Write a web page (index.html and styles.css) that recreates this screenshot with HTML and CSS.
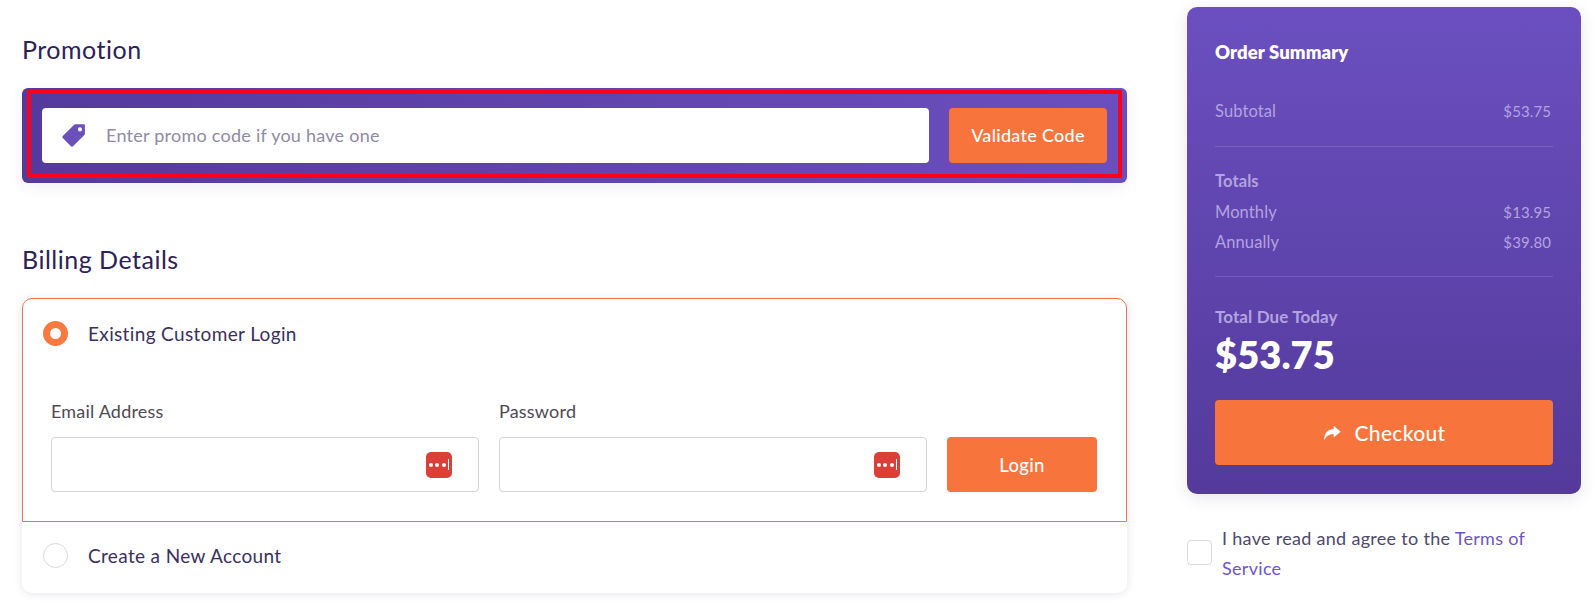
FILE: index.html
```html
<!DOCTYPE html>
<html lang="en">
<head>
<meta charset="utf-8">
<title>Checkout</title>
<link rel="stylesheet" href="styles.css">
</head>
<body>
<main class="page">
  <section class="main-col">
    <h2 class="section-title promo-title">Promotion</h2>
    <div class="promo-box">
      <form class="promo-inner">
        <div class="promo-field">
          <svg class="tag-icon" viewBox="1.6 1.5 21 20.700" width="23" height="23"><path fill="#6b4fbb" fill-rule="evenodd" d="M14 1.500h7.600c.5 0 .9.4.9.9V10c0 .5-.2 1-.5 1.300L11.600 21.700c-.5.5-1.300.5-1.800 0L2.300 14.200c-.5-.5-.5-1.300 0-1.800L12.700 2c.3-.3.8-.5 1.300-.5zM18 4.400a1.900 1.900 0 1 0 0 3.800 1.900 1.900 0 0 0 0-3.800z"/></svg>
          <span class="placeholder">Enter promo code if you have one</span>
        </div>
        <button type="button" class="btn promo-btn">Validate Code</button>
      </form>
    </div>

    <h2 class="section-title billing-title">Billing Details</h2>
    <div class="billing-card">
      <div class="panel-active">
        <div class="radio-row">
          <span class="radio radio-on"></span>
          <span class="radio-label">Existing Customer Login</span>
        </div>
        <div class="login-grid">
          <div class="field">
            <label class="field-label">Email Address</label>
            <div class="input-box"><span class="keeper"><i></i><i></i><i></i><b></b></span></div>
          </div>
          <div class="field">
            <label class="field-label">Password</label>
            <div class="input-box"><span class="keeper"><i></i><i></i><i></i><b></b></span></div>
          </div>
          <button type="button" class="btn login-btn">Login</button>
        </div>
      </div>
      <div class="radio-row new-account">
        <span class="radio"></span>
        <span class="radio-label">Create a New Account</span>
      </div>
    </div>
  </section>

  <aside class="side-col">
    <div class="summary">
      <h3 class="summary-title">Order Summary</h3>
      <div class="line first-line"><span>Subtotal</span><span class="val">$53.75</span></div>
      <hr class="rule rule-one">
      <div class="totals-head">Totals</div>
      <div class="line"><span>Monthly</span><span class="val">$13.95</span></div>
      <div class="line"><span>Annually</span><span class="val">$39.80</span></div>
      <hr class="rule rule-two">
      <div class="due-label">Total Due Today</div>
      <div class="due-amount">$53.75</div>
      <button type="button" class="btn checkout-btn">
        <svg class="share-icon" viewBox="0 0 16 14" width="18" height="16"><path fill="#fff" d="M9.500 0.500 15.700 5.900 9.500 11V8C5.500 8 3 9.300 1.200 13.300 0.800 8 3.500 3.900 9.500 3.500z"/></svg>
        <span>Checkout</span>
      </button>
    </div>
    <div class="terms">
      <span class="checkbox"></span>
      <p class="terms-text">I have read and agree to the <a href="#">Terms of Service</a></p>
    </div>
  </aside>
</main>
</body>
</html>
```
FILE: styles.css
```css
* { box-sizing: border-box; }
html, body { margin: 0; height: 100%; }
body {
  background: #fff;
  color: #2c2257;
  font-family: "Lato", "Noto Sans", sans-serif;
  overflow: hidden;
}
.page { display: flex; gap: 60px; padding: 7px 13px 0 22px; }
.main-col { width: 1105px; flex: none; }
.side-col { width: 394px; flex: none; }

.section-title { margin: 0; font-weight: 400; font-size: 25px; line-height: 30px; color: #2c2257; letter-spacing: .5px; }
.promo-title { margin-top: 27px; margin-bottom: 24px; }
.billing-title { margin-top: 61px; margin-bottom: 24px; }

.promo-box {
  height: 95px;
  padding: 2px 5px 5px;
  border-radius: 6px;
  background: linear-gradient(90deg, #543a9c, #6b4fbf);
  box-shadow: 0 4px 14px rgba(60, 40, 120, .08);
}
.promo-inner {
  height: 88px;
  display: flex;
  align-items: center;
  gap: 20px;
  padding: 2px 11px 0;
  border: 4px solid #ff0019;
}
.promo-field {
  flex: 1;
  height: 55px;
  background: #fff;
  border-radius: 4px;
  display: flex;
  align-items: center;
  padding-left: 20px;
  gap: 21px;
}
.tag-icon { flex: none; }
.placeholder { font-size: 18px; color: #8f8aa5; letter-spacing: .25px; }

.btn {
  border: 0;
  border-radius: 4px;
  background: #f7743c;
  color: #fff;
  font-family: inherit;
  font-weight: 500;
  letter-spacing: .3px;
}
.promo-btn { flex: none; width: 158px; height: 55px; font-size: 18px; }

.billing-card {
  height: 295px;
  border-radius: 10px;
  box-shadow: 0 1px 8px rgba(40, 30, 80, .12);
  background: #fff;
}
.panel-active {
  height: 224px;
  border: 1px solid #f7743c;
  border-radius: 10px 10px 0 0;
}
.radio-row { display: flex; align-items: center; gap: 20px; }
.panel-active .radio-row { padding: 22px 0 0 20px; }
.new-account { padding: 21px 0 0 21px; }
.radio { width: 25px; height: 25px; border-radius: 50%; border: 1px solid #d9d9d9; background: #fff; flex: none; }
.radio-on { border: 7px solid #f97a3e; }
.radio-label { font-size: 19px; letter-spacing: .35px; color: #3a3060; }

.login-grid {
  display: grid;
  grid-template-columns: 428px 428px 150px;
  column-gap: 20px;
  align-items: end;
  padding: 53px 0 0 28px;
}
.field-label { display: block; font-size: 18px; line-height: 24px; color: #4e4a55; margin-bottom: 14px; letter-spacing: .2px; }
.input-box {
  height: 55px;
  border: 1px solid #d4d4d4;
  border-radius: 4px;
  background: #fff;
  display: flex;
  align-items: center;
  justify-content: flex-end;
  padding-right: 26px;
}
.keeper {
  width: 26px;
  height: 26px;
  border-radius: 5px;
  background: #dd3e38;
  display: flex;
  align-items: center;
  justify-content: flex-end;
  gap: 2.500px;
  padding-right: 3px;
}
.keeper i { width: 4px; height: 4px; border-radius: 50%; background: #fff; }
.keeper b { width: 1px; height: 11px; background: #fff; }
.login-btn { height: 55px; font-size: 18.500px; }

.summary {
  height: 487px;
  border-radius: 10px;
  padding: 0 28px;
  background: linear-gradient(180deg, #6b4fc0, #533a9b);
  box-shadow: 0 4px 16px rgba(60, 40, 120, .12);
  color: #b3a3e0;
  font-size: 16.500px;
  letter-spacing: .1px;
}
.summary-title { margin: 0; padding-top: 31px; font-size: 18.500px; line-height: 28px; font-weight: 800; color: #fff; }
.line { display: flex; justify-content: space-between; line-height: 30px; }
.val { font-size: 15px; margin-right: 2px; }
.first-line { margin-top: 30px; }
.rule { border: 0; border-top: 1px solid rgba(255, 255, 255, .14); margin: 0; }
.rule-one { margin-top: 20px; }
.totals-head { margin-top: 19px; margin-bottom: 1px; line-height: 30px; font-weight: 700; }
.rule-two { margin-top: 19px; }
.due-label { margin-top: 25px; line-height: 30px; font-size: 17px; font-weight: 700; }
.due-amount { font-size: 38px; line-height: 46px; font-weight: 800; color: #fff; margin-top: -1px; }
.checkout-btn {
  width: 100%;
  height: 65px;
  margin-top: 23px;
  font-size: 21px;
  display: flex;
  align-items: center;
  justify-content: center;
  gap: 14px;
}

.terms { display: flex; align-items: flex-start; gap: 10px; margin-top: 29px; }
.checkbox { width: 25px; height: 25px; border: 1px solid #d9d9d9; border-radius: 4px; flex: none; margin-top: 17px; }
.terms-text { margin: 0; font-size: 18px; line-height: 30px; color: #4e4770; letter-spacing: .3px; }
.terms-text a { color: #6f55c8; text-decoration: none; }
```
